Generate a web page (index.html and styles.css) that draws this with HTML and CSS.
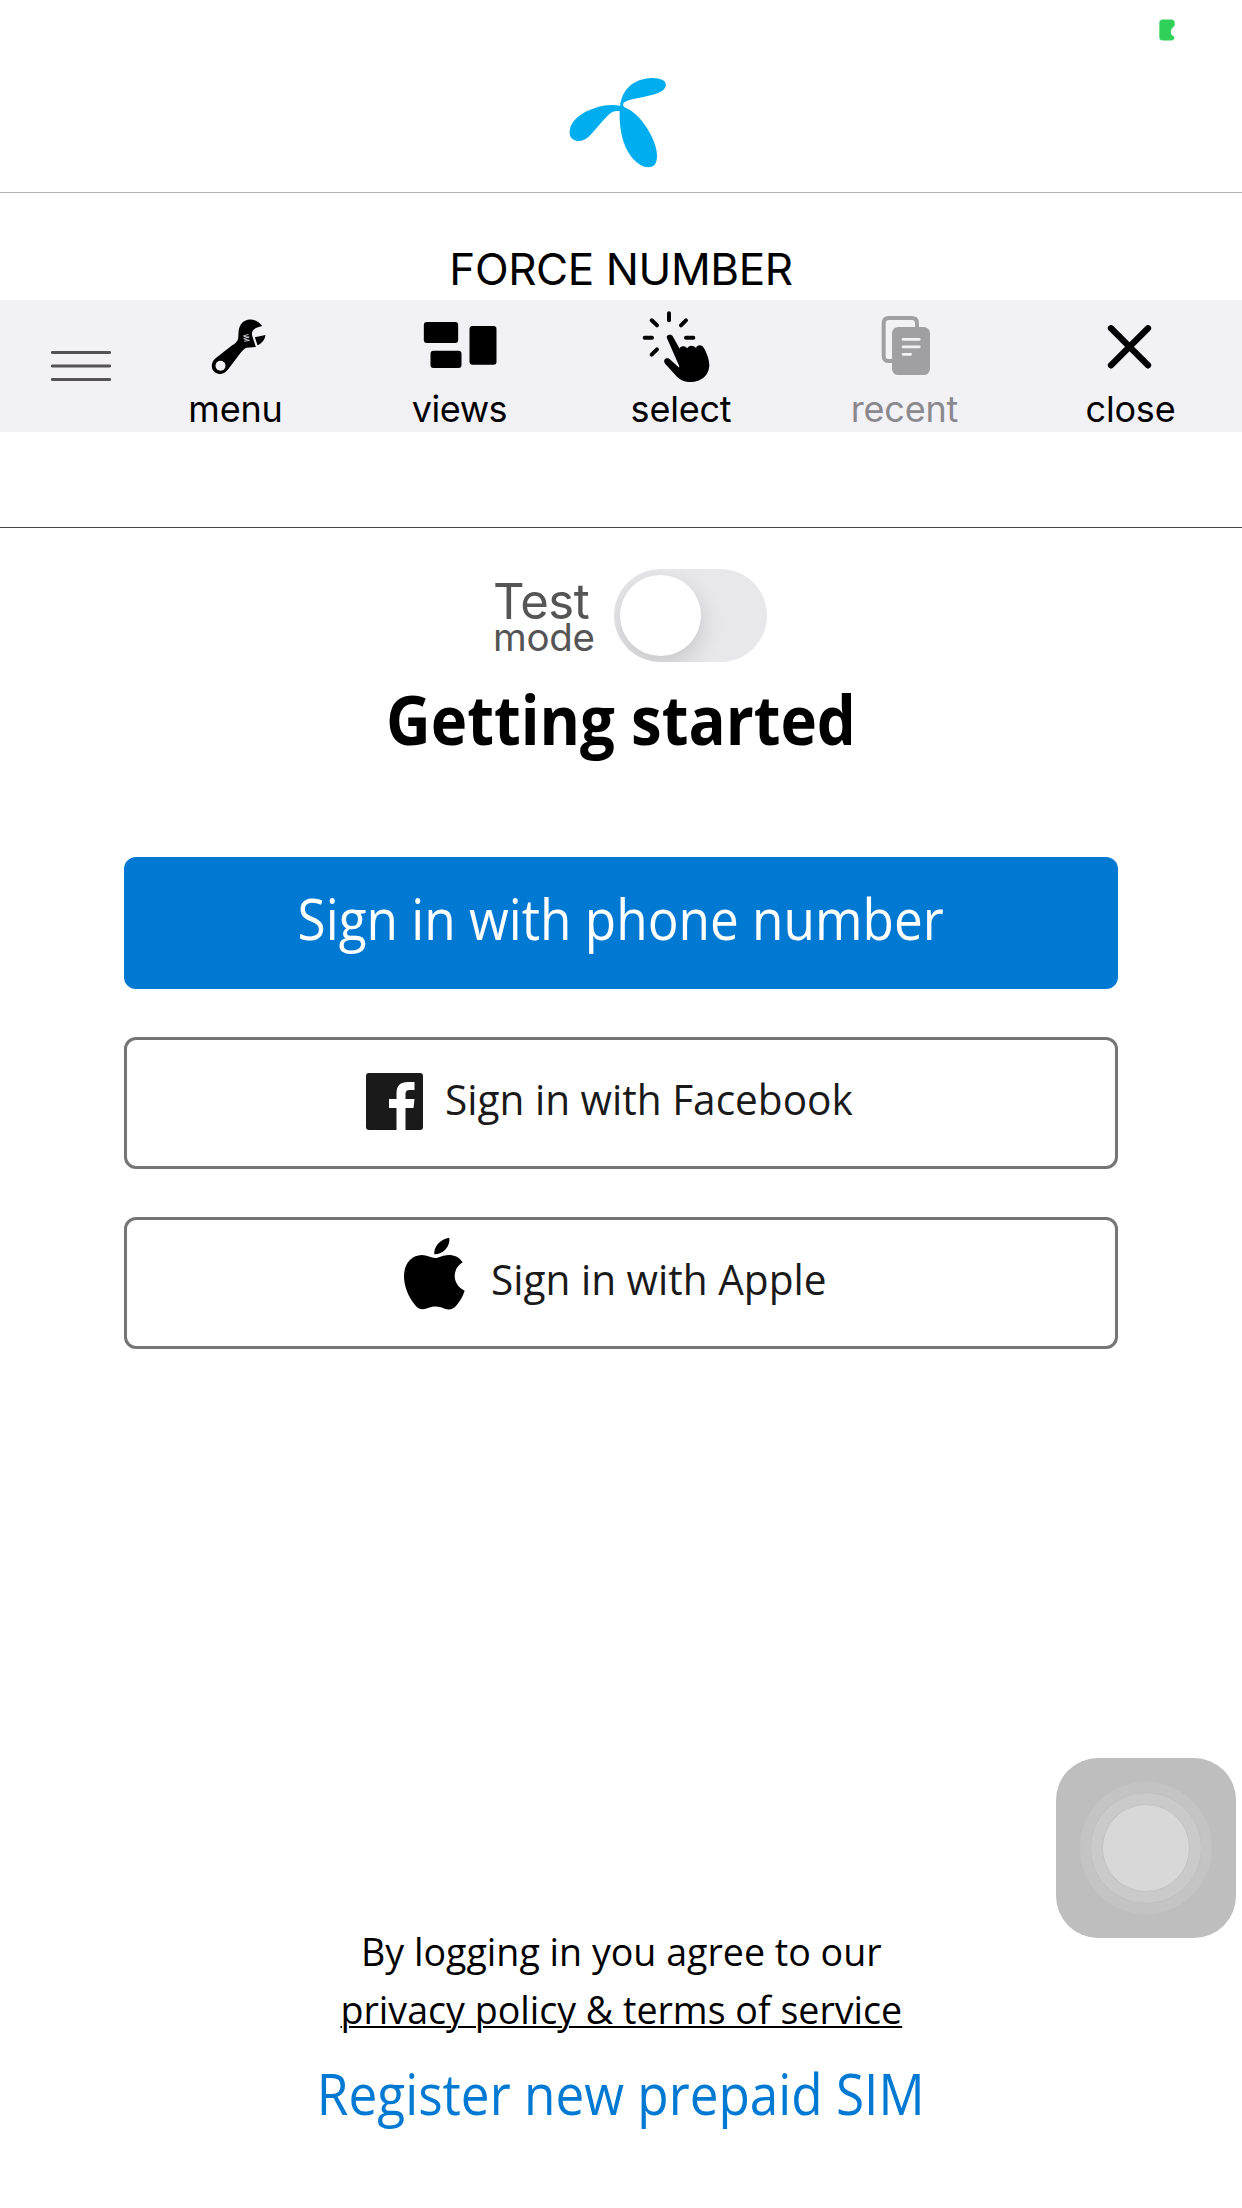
FILE: index.html
```html
<!DOCTYPE html>
<html lang="en">
<head>
<meta charset="utf-8">
<title>Getting started</title>
<link rel="stylesheet" href="styles.css">
</head>
<body>
<div class="screen">
  <header class="brand">
    <svg class="brand-logo" viewBox="0 0 480 384" aria-hidden="true">
      <g fill="#00adef">
        <path d="M240 142C242 104 263 73 300 60C324 52 353 51 369 61C382 69 380 84 366 93C337 111 284 111 254 126C248 130 248 135 252 141C282 152 314 186 334 227C350 260 356 290 347 310C341 323 321 326 303 316C272 298 252 262 244 220C240 197 238 175 239 153C223 152 215 155 203 167C184 186 168 207 152 224C141 237 128 243 115 243C96 242 87 230 89 213C92 181 124 158 163 145C187 136 214 133 240 137Z"/>
      </g>
    </svg>
    <svg class="battery" viewBox="0 0 50 68" aria-hidden="true">
      <path d="M12 1H38Q49 1 49 12V21C42 27 37 31 37 40C37 48 43 53 48 55V58Q46 67 37 67H12Q1 67 1 56V12Q1 1 12 1Z" fill="#30d158"/>
    </svg>
  </header>

  <div class="force">FORCE NUMBER</div>

  <nav class="toolbar">
    <svg class="drag" viewBox="153 210 180 396" aria-hidden="true">
      <path d="M157 367.500H329M157 408H329M157 448.500H329" stroke="#555257" stroke-width="9" stroke-linecap="round"/>
    </svg>
    <div class="tool">
      <svg class="tool-icon" viewBox="526.5 210 360 258" aria-hidden="true">
        <path d="M785 288C775 273 757 266 742 269C723 273 715 289 714 309L713 326C710 334 705 340 695 346L650 381C638 389 633 399 634 411C636 424 647 432 660 432C670 431 677 426 683 418L716 374C723 364 730 356 738 353L766 351L755 317C752 302 760 293 785 288Z"/>
        <path d="M763 322L795 315C793 328 785 340 771 346Z"/>
        <circle cx="660" cy="407" r="15" fill="#f2f1f6"/>
        <path d="M728 318L744 313M729 326L746 321M731 334L747 331M730 319L746 322M731 327L746 331" stroke="#f2f1f6" stroke-width="2.500"/>
      </svg>
      <span>menu</span>
    </div>
    <div class="tool">
      <svg class="tool-icon" viewBox="-1.5 210 360 258" aria-hidden="true">
        <rect x="70" y="276" width="103" height="63" rx="9"/>
        <rect x="90" y="362" width="93" height="52" rx="9"/>
        <rect x="207" y="288" width="81" height="116" rx="9"/>
      </svg>
      <span class="tight">views</span>
    </div>
    <div class="tool">
      <svg class="tool-icon" viewBox="663 210 360 258" aria-hidden="true">
        <path d="M807 250V271M755 271L771 286M858 271L843 286M734 323H756M858 323H880M771 358L755 374" stroke="#000" stroke-width="12" stroke-linecap="round" fill="none"/>
        <path d="M801 325C797 314 814 310 819 320L839 356C839 348 854 345 862 355C866 345 880 344 888 354C891 344 905 343 911 353C920 367 928 389 928 406C927 437 904 456 872 456C854 456 842 450 831 440L796 402C786 390 799 379 811 389L836 412C839 413 838 409 836 404Z"/>
      </svg>
      <span>select</span>
    </div>
    <div class="tool tool-disabled">
      <svg class="tool-icon" viewBox="75 30 360 258" aria-hidden="true">
        <path d="M218 213H207Q191 213 191 197V100Q191 84 207 84H275Q291 84 291 100V114" fill="none" stroke="#a09fa4" stroke-width="12"/>
        <rect x="216" y="111" width="114" height="144" rx="19" fill="#a09fa4"/>
        <path d="M249 148H298M249 170.500H298M249 193H272" stroke="#f2f1f6" stroke-width="8" stroke-linecap="round"/>
      </svg>
      <span>recent</span>
    </div>
    <div class="tool">
      <svg class="tool-icon" viewBox="753 30 360 258" aria-hidden="true">
        <path d="M873 115L984 226M984 115L873 226" stroke="#000" stroke-width="19" stroke-linecap="round"/>
      </svg>
      <span>close</span>
    </div>
  </nav>

  <main class="content">
    <div class="test">
      <div class="test-label"><span class="test-big">Test</span><span class="test-small">mode</span></div>
      <div class="switch"><div class="knob"></div></div>
    </div>
    <h1 class="title">Getting started</h1>
    <div class="actions">
      <button class="btn btn-primary"><span>Sign in with phone number</span></button>
      <button class="btn btn-facebook">
        <svg class="fb-icon" viewBox="0 0 57 57" aria-hidden="true">
          <path d="M3 0H54Q57 0 57 3V54Q57 57 54 57H39.500V35H47.500L48.500 26H39.500V21Q39.500 17 43.500 17H48.500V9H42Q30.500 9 30.500 20V26H23V35H30.500V57H3Q0 57 0 54V3Q0 0 3 0Z" fill="#1a1a1a"/>
        </svg>
        <span>Sign in with Facebook</span>
      </button>
      <button class="btn btn-apple">
        <svg class="apple-icon" viewBox="72 113 183 217" aria-hidden="true">
          <path d="M208 114C211 139 192 163 163 164C160 141 182 117 208 114Z"/>
          <path d="M248 188C232 197 224 213 224 230C225 250 237 266 254 273C249 289 241 302 231 315C220 329 209 332 194 327C176 319 159 319 142 326C126 332 116 329 105 316C85 292 72 260 72 230C72 191 95 167 125 166C142 166 153 175 166 175C178 175 188 165 210 166C226 167 239 174 248 188Z"/>
        </svg>
        <span>Sign in with Apple</span>
      </button>
    </div>
  </main>

  <footer class="footer">
    <p class="legal">By logging in you agree to our<br><a class="legal-link">privacy policy &amp; terms of service</a></p>
    <a class="register">Register new prepaid SIM</a>
  </footer>

  <div class="assistive"><div class="ring ring-outer"><div class="ring ring-middle"><div class="ring ring-inner"></div></div></div></div>
</div>
</body>
</html>
```
FILE: styles.css
```css
* { box-sizing: border-box; }
body { margin: 0; background: #fff; color: #000; }
svg { display: block; flex: none; }

.screen {
  position: relative;
  display: flex;
  flex-direction: column;
  width: 1242px;
  height: 2208px;
  overflow: hidden;
  font-family: "Open Sans", "Noto Sans", sans-serif;
}

.brand {
  position: relative;
  display: flex;
  justify-content: center;
  height: 193px;
  padding: 60px 2px 0 0;
  border-bottom: 1px solid #b2b2b2;
}
.brand-logo { width: 160px; height: 128px; }
.battery { position: absolute; left: 1159px; top: 19px; width: 16px; height: 22px; }

.force {
  height: 107px;
  padding-top: 46px;
  text-align: center;
  font: 44px/60px Inter, sans-serif;
  letter-spacing: -0.4px;
}

.toolbar {
  display: grid;
  grid-template-columns: 124px 223px 225px 218px 229px 223px;
  height: 132px;
  background: #f2f1f6;
  font: 36px/46px Inter, sans-serif;
  letter-spacing: -0.2px;
}
.drag { width: 60px; height: 132px; margin-left: 51px; }
.tool { display: flex; flex-direction: column; align-items: center; }
.tool-icon { width: 120px; height: 86px; }
.tool-disabled { color: #8a898e; }
.tight { letter-spacing: -0.5px; }

.content {
  margin-top: 95px;
  padding: 41px 124px 0;
  border-top: 1px solid #444;
}
.test { display: flex; justify-content: center; height: 93px; padding-left: 18px; }
.test-label {
  display: flex;
  flex-direction: column;
  width: 121px;
  padding-top: 13px;
  color: #555;
  font-family: Inter, sans-serif;
}
.test-big { font-size: 49px; line-height: 40px; letter-spacing: -0.5px; }
.test-small { font-size: 38.500px; line-height: 31px; letter-spacing: -0.3px; }
.switch {
  width: 153px;
  height: 93px;
  padding: 6px;
  border-radius: 47px;
  background: #e8e8ea;
  overflow: hidden;
}
.knob {
  width: 81px;
  height: 81px;
  border-radius: 50%;
  background: #fff;
  box-shadow: 0 9px 24px rgba(0, 0, 0, 0.15);
}
.title {
  margin: 12px 0 93px;
  text-align: center;
  font-size: 68px;
  font-weight: 700;
  line-height: 90px;
  transform: scaleX(0.907);
}

.actions { display: flex; flex-direction: column; gap: 48px; }
.btn {
  display: flex;
  align-items: center;
  justify-content: center;
  height: 132px;
  padding: 0;
  border: 3px solid #757575;
  border-radius: 12px;
  background: #fff;
  color: #1a1a1a;
  font-family: inherit;
  font-size: 42px;
  white-space: nowrap;
}
.btn span {
  padding-bottom: 10px;
  transform: scaleX(0.966);
  transform-origin: left;
}
.btn-primary {
  border: 0;
  background: #0079d3;
  color: #fff;
  font-size: 56px;
}
.btn-primary span { transform: scaleX(0.916); transform-origin: center; }
.btn-facebook { gap: 22px; padding-right: 9px; }
.btn-apple { gap: 26px; }
.fb-icon { width: 57px; height: 57px; margin-bottom: 4px; }
.apple-icon { width: 61px; height: 73px; margin-bottom: 19px; }

.footer {
  display: flex;
  flex-direction: column;
  align-items: center;
  gap: 17px;
  margin-top: auto;
  padding-bottom: 77px;
  text-align: center;
}
.legal { margin: 0; font-size: 39px; line-height: 58px; transform: scaleX(0.964); }
.legal-link {
  text-decoration: underline;
  text-decoration-thickness: 2px;
  text-underline-offset: 2px;
}
.register { color: #0079d3; font-size: 56px; line-height: 76px; transform: scaleX(0.916); }

.assistive {
  position: absolute;
  left: 1056px;
  top: 1758px;
  display: flex;
  align-items: center;
  justify-content: center;
  width: 180px;
  height: 180px;
  border-radius: 42px;
  background: #bebebe;
}
.ring { display: flex; align-items: center; justify-content: center; border-radius: 50%; }
.ring-outer { width: 132px; height: 132px; background: #c4c4c4; }
.ring-middle { width: 112px; height: 112px; border: 1px solid #c0c0c0; background: #cacaca; }
.ring-inner { width: 88px; height: 88px; border: 1px solid #c3c3c3; background: #d8d8d8; }
```
